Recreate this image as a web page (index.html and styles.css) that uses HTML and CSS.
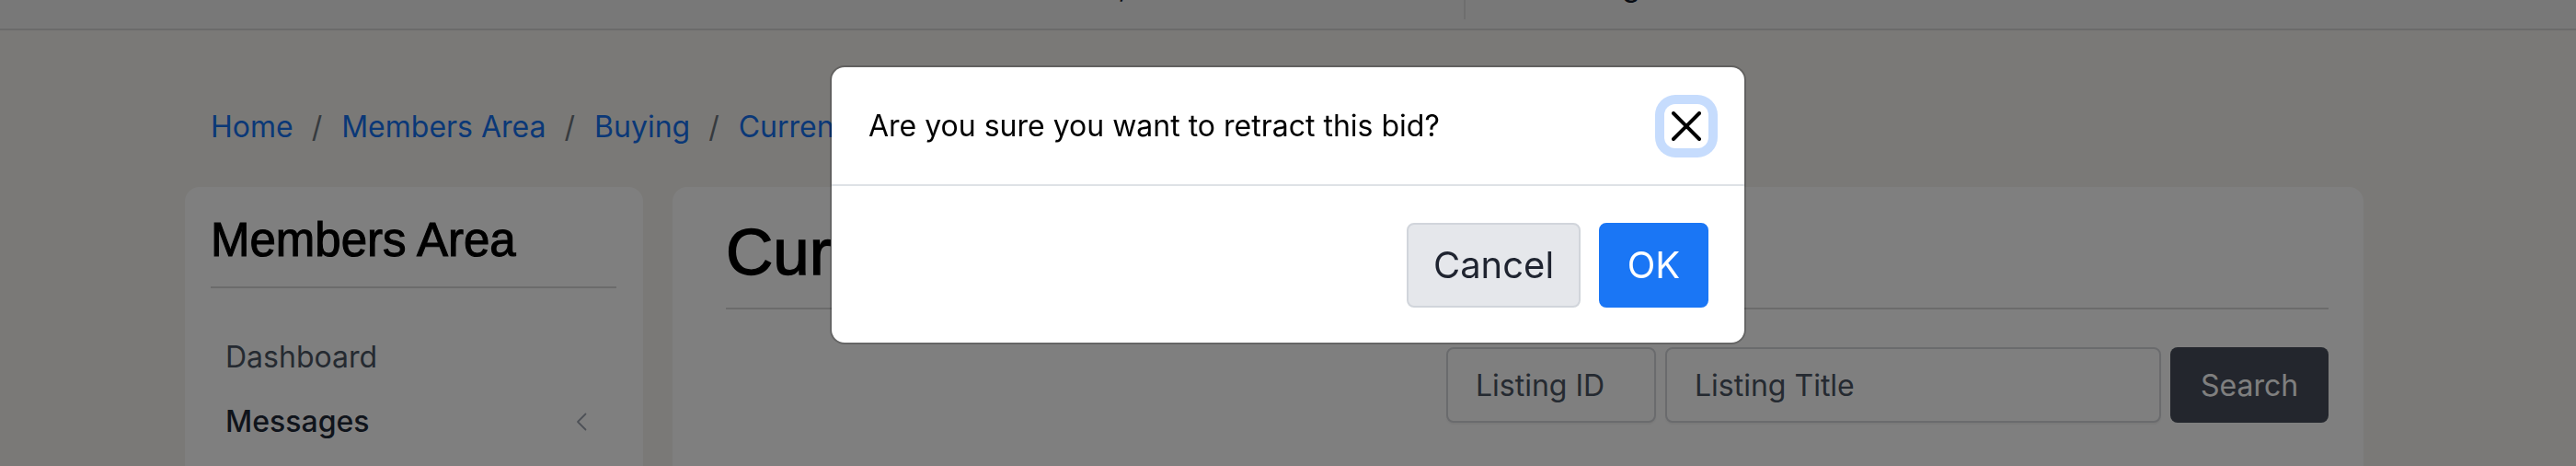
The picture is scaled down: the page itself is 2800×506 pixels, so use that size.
FILE: index.html
```html
<!DOCTYPE html>
<html lang="en">
<head>
<meta charset="utf-8">
<title>Current Bids</title>
<link rel="stylesheet" href="styles.css">
</head>
<body>
<header class="topbar">
  <nav class="topnav">
    <a class="topnav-link" href="#">Welcome, Member</a>
    <a class="topnav-link" href="#">Watchlist (0)</a>
    <span class="topnav-divider"></span>
    <a class="topnav-link" href="#">Sell</a>
    <a class="topnav-link" href="#">Log out</a>
  </nav>
</header>

<main class="page">
  <ol class="breadcrumb">
    <li><a href="#">Home</a></li>
    <li><a href="#">Members Area</a></li>
    <li><a href="#">Buying</a></li>
    <li><a href="#">Current Bids</a></li>
  </ol>

  <div class="layout">
    <aside class="card sidebar">
      <h4 class="sidebar-title">Members Area</h4>
      <ul class="side-nav">
        <li class="side-item">Dashboard</li>
        <li class="side-item side-item-parent">
          <span>Messages</span>
          <svg class="chevron" width="12" height="20" viewBox="0 0 12 20" aria-hidden="true"><polyline points="10.5,1.5 2,10 10.5,18.5" fill="none" stroke="#9ca3af" stroke-width="1.8" stroke-linecap="round" stroke-linejoin="round"/></svg>
        </li>
        <li class="side-item side-item-parent">
          <span>Buying</span>
        </li>
        <li class="side-item side-item-parent">
          <span>Selling</span>
        </li>
      </ul>
    </aside>

    <section class="card main">
      <h1 class="page-title">Current Bids</h1>
      <form class="search">
        <input class="field field-id" type="text" placeholder="Listing ID">
        <input class="field field-title" type="text" placeholder="Listing Title">
        <button class="btn-search" type="button">Search</button>
      </form>
    </section>
  </div>
</main>

<div class="backdrop"></div>

<div class="modal" role="dialog" aria-modal="true">
  <div class="modal-dialog">
    <div class="modal-header">
      <h5 class="modal-title">Are you sure you want to retract this bid?</h5>
      <button class="btn-close" type="button" aria-label="Close">
        <svg width="32" height="32" viewBox="0 0 16 16" aria-hidden="true"><path fill="#000" d="M.293.293a1 1 0 0 1 1.414 0L8 6.586 14.293.293a1 1 0 1 1 1.414 1.414L9.414 8l6.293 6.293a1 1 0 0 1-1.414 1.414L8 9.414l-6.293 6.293a1 1 0 0 1-1.414-1.414L6.586 8 .293 1.707a1 1 0 0 1 0-1.414z"/></svg>
      </button>
    </div>
    <div class="modal-footer">
      <button class="btn btn-cancel" type="button">Cancel</button>
      <button class="btn btn-ok" type="button">OK</button>
    </div>
  </div>
</div>
</body>
</html>
```

FILE: styles.css
```css
* {
  box-sizing: border-box;
}

html,
body {
  margin: 0;
  padding: 0;
  overflow: hidden;
}

body {
  width: 2800px;
  height: 506px;
  font-family: Inter, "Noto Sans", "Liberation Sans", sans-serif;
  background: #f5f3ef;
  color: #1f2937;
}

.topbar {
  height: 33px;
  background: #f1f1f1;
  border-bottom: 2px solid #d6d6d6;
  overflow: hidden;
}

.topnav {
  display: flex;
  align-items: flex-start;
  gap: 10px;
  margin-left: 1075px;
  margin-top: -39px;
  font-size: 32px;
  line-height: 48px;
}

.topnav-link {
  color: #111827;
  text-decoration: none;
  white-space: nowrap;
}

.topnav-divider {
  width: 2px;
  height: 60px;
  background: #dcdcdc;
  margin: 0 58px 0 21px;
}

/* ---------- page ---------- */
.page {
  padding: 81px 0 0 201px;
}

.breadcrumb {
  display: flex;
  list-style: none;
  margin: 0 0 41px;
  padding: 0 0 0 28px;
  font-size: 32px;
  line-height: 48px;
}

.breadcrumb li + li::before {
  content: "/";
  color: #6c757d;
  padding: 0 21px 0 20px;
}

.breadcrumb a {
  color: #1570ef;
  text-decoration: none;
}

.layout {
  display: grid;
  grid-template-columns: 498px 1838px;
  gap: 32px;
  align-items: start;
}

.card {
  background: #fff;
  border-radius: 16px;
  min-height: 620px;
}

/* ---------- sidebar ---------- */
.sidebar {
  padding: 28px 29px 0 28px;
}

.sidebar-title {
  margin: 0;
  font-family: "Liberation Sans", Arial, sans-serif;
  font-size: 51px;
  line-height: 60px;
  font-weight: 400;
  -webkit-text-stroke: 1.1px #000;
  color: #000;
  padding-bottom: 20px;
  border-bottom: 2px solid #d6d6d6;
}

.side-nav {
  list-style: none;
  margin: 40px 0 0;
  padding: 0;
}

.side-item {
  display: flex;
  justify-content: space-between;
  align-items: center;
  padding: 11px 32px 11px 16px;
  font-size: 32px;
  line-height: 48px;
  color: #4b5563;
}

.side-item-parent {
  color: #1f2937;
  font-weight: 500;
}

.chevron {
  display: block;
}

/* ---------- main ---------- */
.main {
  padding: 29px 38px 0 58px;
}

.page-title {
  margin: 0;
  font-family: "Liberation Sans", Arial, sans-serif;
  font-size: 71px;
  line-height: 84px;
  font-weight: 400;
  -webkit-text-stroke: 1.4px #000;
  color: #000;
  padding-bottom: 18px;
  border-bottom: 2px solid #d6d6d6;
}

.search {
  display: flex;
  justify-content: flex-end;
  gap: 10px;
  margin-top: 41px;
}

.field {
  height: 82px;
  padding: 0 30px;
  border: 2px solid #d4d6db;
  border-radius: 8px;
  background: #fff;
  font-family: inherit;
  font-size: 32px;
  color: #1f2937;
  box-shadow: 0 2px 2px rgba(0, 0, 0, 0.05);
}

.field::placeholder {
  color: #4b5563;
  opacity: 1;
}

.field-id {
  width: 228px;
}

.field-title {
  width: 539px;
}

.btn-search {
  width: 172px;
  height: 82px;
  border: 0;
  border-radius: 8px;
  background: #464d5a;
  color: #fff;
  font-family: inherit;
  font-size: 32px;
}

/* ---------- modal ---------- */
.backdrop {
  position: fixed;
  inset: 0;
  background: rgba(0, 0, 0, 0.5);
}

.modal {
  position: fixed;
  inset: 0;
  display: flex;
  justify-content: center;
  align-items: flex-start;
  padding-top: 71px;
}

.modal-dialog {
  width: 996px;
  background: #fff;
  border: 2px solid rgba(0, 0, 0, 0.2);
  border-radius: 16px;
  background-clip: padding-box;
}

.modal-header {
  display: flex;
  justify-content: space-between;
  align-items: center;
  padding: 40px 39px 39px 40px;
  border-bottom: 2px solid #dee2e6;
}

.modal-title {
  margin: 0;
  font-size: 32px;
  line-height: 48px;
  font-weight: 400;
  color: #000;
}

.btn-close {
  display: flex;
  align-items: center;
  justify-content: center;
  width: 48px;
  height: 48px;
  padding: 0;
  border: 0;
  border-radius: 12px;
  background: #fff;
  box-shadow: 0 0 0 10px #c6dcfd;
}

.modal-footer {
  display: flex;
  justify-content: flex-end;
  gap: 20px;
  padding: 40px 39px 38px 40px;
}

.btn {
  padding: 14px 0;
  border: 2px solid transparent;
  border-radius: 8px;
  font-family: inherit;
  font-size: 40px;
  line-height: 60px;
  text-align: center;
}

.btn-cancel {
  width: 189px;
  background: #e5e7eb;
  border-color: #d1d5db;
  color: #1f2430;
}

.btn-ok {
  width: 119px;
  background: #1a76f5;
  border-color: #1a76f5;
  color: #fff;
}
```
